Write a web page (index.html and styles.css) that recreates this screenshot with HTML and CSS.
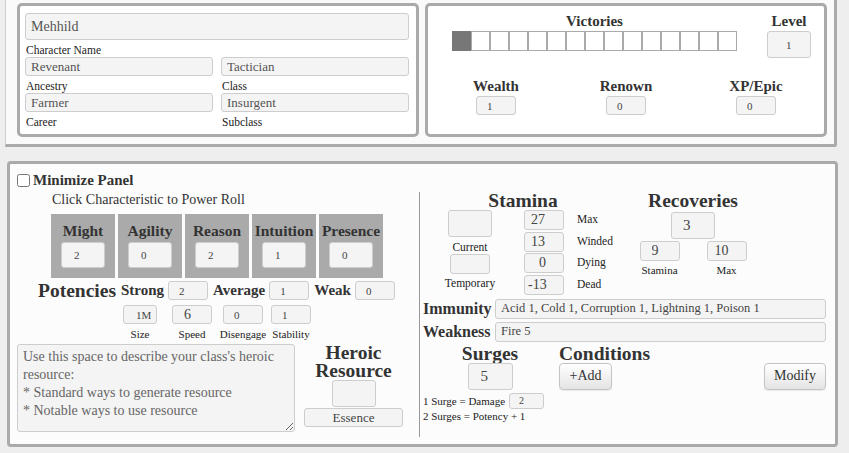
FILE: index.html
```html
<!DOCTYPE html>
<html>
<head>
<meta charset="utf-8">
<link rel="stylesheet" href="styles.css">
</head>
<body>
<div class="top">
  <section class="panel ident">
    <input class="field name" value="Mehhild">
    <div class="lbl">Character Name</div>
    <div class="pair">
      <div><input class="field txt" value="Revenant"><div class="lbl">Ancestry</div></div>
      <div><input class="field txt" value="Tactician"><div class="lbl">Class</div></div>
      <div><input class="field txt" value="Farmer"><div class="lbl">Career</div></div>
      <div><input class="field txt" value="Insurgent"><div class="lbl">Subclass</div></div>
    </div>
  </section>
  <section class="panel prog">
    <div class="prog-row">
      <div class="vic">
        <div class="h3">Victories</div>
        <div class="boxes"><span class="on"></span><span></span><span></span><span></span><span></span><span></span><span></span><span></span><span></span><span></span><span></span><span></span><span></span><span></span><span></span></div>
      </div>
      <div class="lvl">
        <div class="h3">Level</div>
        <input class="field num lvl-in" value="1">
      </div>
    </div>
    <div class="prog-row2">
      <div class="stat"><div class="h3">Wealth</div><input class="field num sm" value="1"></div>
      <div class="stat"><div class="h3">Renown</div><input class="field num sm" value="0"></div>
      <div class="stat"><div class="h3">XP/Epic</div><input class="field num sm" value="0"></div>
    </div>
  </section>
</div>

<main class="main">
  <label class="minimize"><input type="checkbox"><span>Minimize Panel</span></label>
  <div class="cols">
    <div class="left">
      <div class="prompt">Click Characteristic to Power Roll</div>
      <div class="chars">
        <div class="char"><div class="char-name">Might</div><input class="field num char-in" value="2"></div>
        <div class="char"><div class="char-name">Agility</div><input class="field num char-in" value="0"></div>
        <div class="char"><div class="char-name">Reason</div><input class="field num char-in" value="2"></div>
        <div class="char"><div class="char-name">Intuition</div><input class="field num char-in" value="1"></div>
        <div class="char"><div class="char-name">Presence</div><input class="field num char-in" value="0"></div>
      </div>
      <div class="potency">
        <span class="pot-title">Potencies</span>
        <span class="pot-lbl">Strong</span><input class="field num sm" value="2">
        <span class="pot-lbl">Average</span><input class="field num sm" value="1">
        <span class="pot-lbl">Weak</span><input class="field num sm" value="0">
      </div>
      <div class="move">
        <div class="mv"><input class="field num mv-size" value="1M"><div class="mv-lbl">Size</div></div>
        <div class="mv"><input class="field num mv-in big" value="6"><div class="mv-lbl">Speed</div></div>
        <div class="mv"><input class="field num mv-in" value="0"><div class="mv-lbl">Disengage</div></div>
        <div class="mv"><input class="field num mv-in" value="1"><div class="mv-lbl">Stability</div></div>
      </div>
      <div class="res-row">
        <textarea class="field notes">Use this space to describe your class's heroic resource:
* Standard ways to generate resource
* Notable ways to use resource</textarea>
        <div class="heroic">
          <div class="h2">Heroic Resource</div>
          <input class="field hr-in" value="">
          <input class="field essence" value="Essence">
        </div>
      </div>
    </div>
    <div class="right">
      <div class="vitals">
        <div class="stamina">
          <div class="h2">Stamina</div>
          <div class="st-body">
            <div class="st-cur">
              <input class="field cur-in" value="">
              <div class="lbl2 cur-lbl">Current</div>
              <input class="field tmp-in" value="">
              <div class="lbl2 tmp-lbl">Temporary</div>
            </div>
            <div class="st-list">
              <div class="st-row"><input class="field num st-in" value="27"><span class="lbl2">Max</span></div>
              <div class="st-row"><input class="field num st-in" value="13"><span class="lbl2">Winded</span></div>
              <div class="st-row"><input class="field num st-in st-dying" value="0"><span class="lbl2">Dying</span></div>
              <div class="st-row"><input class="field num st-in st-dead" value="-13"><span class="lbl2">Dead</span></div>
            </div>
          </div>
        </div>
        <div class="recov">
          <div class="h2">Recoveries</div>
          <input class="field num rec-in" value="3">
          <div class="rc-row">
            <div class="rc-col"><input class="field num st-in rc-a" value="9"><div class="lbl3">Stamina</div></div>
            <div class="rc-col"><input class="field num st-in rc-b" value="10"><div class="lbl3">Max</div></div>
          </div>
        </div>
      </div>
      <div class="def-row imm">
        <span class="def-lbl">Immunity</span>
        <input class="field def-in" value="Acid 1, Cold 1, Corruption 1, Lightning 1, Poison 1">
      </div>
      <div class="def-row">
        <span class="def-lbl">Weakness</span>
        <input class="field def-in" value="Fire 5">
      </div>
      <div class="lower">
        <div class="surges">
          <div class="h2">Surges</div>
          <input class="field num surge-in" value="5">
          <div class="surge-line"><span>1 Surge = Damage</span><input class="field num surge-dmg" value="2"></div>
          <div class="surge-line2">2 Surges = Potency + 1</div>
        </div>
        <div class="conds">
          <div class="h2 left-h">Conditions</div>
          <div class="cond-btns">
            <button class="btn add">+Add</button>
            <button class="btn modify">Modify</button>
          </div>
        </div>
      </div>
    </div>
  </div>
</main>
</body>
</html>
```

FILE: styles.css
```css
html, body {
  margin: 0;
  padding: 0;
}
body {
  background: #eeeeee;
  font-family: "Liberation Serif", "Times New Roman", serif;
  color: #333;
  width: 849px;
  height: 453px;
  overflow: hidden;
}

/* ---------- generic field ---------- */
.field {
  box-sizing: border-box;
  display: block;
  margin: 0;
  border: 1px solid #cdcdcd;
  border-radius: 3px;
  background: #f4f4f4;
  font-family: "Liberation Serif", "Times New Roman", serif;
  color: #555;
  padding: 0 5px;
  outline: none;
}
.num {
  font-size: 11px;
  padding-left: 10px;
  color: #444;
}

/* ---------- top area ---------- */
.top {
  display: flex;
  gap: 6px;
  box-sizing: border-box;
  margin-left: 5px;
  width: 832px;
  padding: 3px 7px 7px 11px;
  background: #fafafa;
  border-left: 1px solid #cfcfcf;
  border-right: 3px solid #aaa;
  border-bottom: 3px solid #aaa;
  border-bottom-right-radius: 3px;
}
.panel {
  box-sizing: border-box;
  width: 402px;
  height: 134px;
  border: 3px solid #aaa;
  border-radius: 5px;
  background: #fff;
}
.ident {
  padding: 7px 7px 0 5px;
}
.name {
  width: 384px;
  height: 27px;
  font-size: 14px;
}
.lbl {
  font-size: 11.5px;
  line-height: 14px;
  height: 17px;
  padding-top: 3px;
  box-sizing: border-box;
  color: #222;
  padding-left: 1px;
}
.pair {
  display: grid;
  grid-template-columns: 188px 188px;
  column-gap: 8px;
}
.txt {
  width: 188px;
  height: 19px;
  font-size: 13px;
}

.prog {
  padding-top: 7px;
}
.h3 {
  font-weight: bold;
  font-size: 15px;
  line-height: 16px;
  text-align: center;
  color: #333;
}
.prog-row {
  display: flex;
  padding-left: 24px;
  gap: 30px;
}
.vic {
  width: 285px;
}
.boxes {
  display: flex;
  margin-top: 2px;
}
.boxes span {
  box-sizing: border-box;
  width: 19px;
  height: 20px;
  border: 1px solid #aaa;
  background: #fff;
}
.boxes span.on {
  background: #777;
  border-color: #777;
}
.lvl {
  width: 44px;
  display: flex;
  flex-direction: column;
  align-items: center;
}
.lvl-in {
  margin-top: 2px;
  width: 44px;
  height: 27px;
  padding-left: 18px;
}
.prog-row2 {
  display: flex;
  gap: 30px;
  padding-left: 18px;
  margin-top: 20px;
}
.stat {
  width: 100px;
  display: flex;
  flex-direction: column;
  align-items: center;
}
.sm {
  width: 40px;
  height: 19px;
}
.stat .sm {
  margin-top: 2px;
}

/* ---------- main panel ---------- */
.main {
  display: block;
  box-sizing: border-box;
  margin: 14px 0 0 7px;
  width: 831px;
  height: 286px;
  border: 3px solid #aaa;
  border-radius: 4px;
  background: #fcfcfc;
  padding: 10px 0 0 7px;
}
.minimize {
  display: flex;
  align-items: center;
  gap: 3px;
  height: 13px;
  font-weight: bold;
  font-size: 15px;
  color: #333;
}
.minimize input {
  margin: 0;
  width: 13px;
  height: 13px;
}
.cols {
  display: flex;
  margin: 5px 0 0 -7px;
  height: 245px;
}
.left {
  width: 409px;
}
.right {
  flex: 1;
  border-left: 1px solid #999;
  padding: 0 9px 0 3px;
}

.prompt {
  margin-left: 42px;
  font-size: 14px;
  line-height: 16px;
  color: #333;
}
.chars {
  display: flex;
  gap: 3px;
  margin: 6px 0 0 41px;
}
.char {
  width: 64px;
  height: 64px;
  background: #aaa;
  display: flex;
  flex-direction: column;
  align-items: center;
  padding-top: 8px;
  box-sizing: border-box;
}
.char-name {
  font-weight: bold;
  font-size: 15.5px;
  line-height: 18px;
  color: #333;
  white-space: nowrap;
}
.char-in {
  margin-top: 2px;
  width: 44px;
  height: 26px;
  padding-left: 12px;
}
.potency {
  display: flex;
  align-items: center;
  gap: 4px;
  margin: 3px 0 0 28px;
  height: 19px;
}
.pot-title {
  font-weight: bold;
  font-size: 19.5px;
  color: #333;
}
.pot-lbl {
  font-weight: bold;
  font-size: 15px;
  color: #333;
  margin-left: 1px;
}
.move {
  display: grid;
  grid-template-columns: 50px 54px 48px 48px;
  margin: 5px 0 0 105px;
}
.mv {
  display: flex;
  flex-direction: column;
  align-items: center;
}
.mv-size {
  width: 34px;
  height: 19px;
  padding-left: 12px;
}
.mv-in {
  width: 40px;
  height: 19px;
}
.mv-in.big {
  font-size: 14px;
  padding-left: 11px;
}
.mv-lbl {
  font-size: 11px;
  line-height: 14px;
  margin-top: 3px;
  color: #222;
  white-space: nowrap;
}
.res-row {
  display: flex;
  margin-top: 3px;
}
.notes {
  margin-left: 7px;
  width: 278px;
  height: 88px;
  font-size: 14px;
  line-height: 18px;
  padding: 3px 5px;
  color: #666;
  resize: both;
  overflow: hidden;
}
.heroic {
  margin-left: 9px;
  width: 99px;
  display: flex;
  flex-direction: column;
  align-items: center;
}
.h2 {
  font-weight: bold;
  font-size: 19.5px;
  line-height: 18px;
  text-align: center;
  color: #333;
}
.hr-in {
  width: 44px;
  height: 27px;
}
.essence {
  margin-top: 1px;
  width: 99px;
  height: 19px;
  font-size: 13px;
  text-align: center;
  color: #444;
}

/* right column */
.vitals {
  display: flex;
}
.stamina {
  width: 200px;
}
.st-body {
  display: flex;
}
.st-cur {
  width: 94px;
  display: flex;
  flex-direction: column;
  align-items: center;
}
.cur-in {
  width: 44px;
  height: 27px;
}
.tmp-in {
  width: 40px;
  height: 20px;
}
.lbl2 {
  font-size: 11.5px;
  line-height: 14px;
  color: #222;
}
.cur-lbl {
  margin-top: 3px;
}
.tmp-lbl {
  margin-top: 2px;
}
.st-list {
  margin-left: 7px;
  display: flex;
  flex-direction: column;
  gap: 1.5px;
}
.st-row {
  display: flex;
  align-items: center;
  gap: 13px;
}
.st-row .lbl2 {
  margin-top: -2px;
}
.st-in {
  width: 40px;
  height: 20px;
  font-size: 14px;
  padding-left: 6px;
}
.st-dying {
  padding-left: 14px;
}
.st-dead {
  padding-left: 3px;
}
.recov {
  width: 140px;
  display: flex;
  flex-direction: column;
  align-items: center;
}
.rec-in {
  margin-top: 2px;
  width: 44px;
  height: 27px;
  font-size: 15px;
  padding-left: 11px;
}
.rc-row {
  display: flex;
  gap: 7px;
  margin-top: 2px;
}
.rc-col {
  width: 60px;
  display: flex;
  flex-direction: column;
  align-items: center;
}
.rc-a {
  padding-left: 11px;
}
.rc-b {
  padding-left: 7px;
}
.lbl3 {
  font-size: 11px;
  line-height: 14px;
  margin-top: 2px;
  color: #222;
}
.def-row {
  display: flex;
  align-items: center;
  margin-top: 3px;
}
.def-row.imm {
  margin-top: 4px;
}
.def-lbl {
  width: 72px;
  font-weight: bold;
  font-size: 16px;
  color: #333;
}
.def-in {
  flex: 1;
  height: 20px;
  font-size: 12.5px;
  color: #444;
}
.lower {
  display: flex;
  margin-top: 3px;
}
.surges {
  width: 134px;
  display: flex;
  flex-direction: column;
}
.surge-in {
  align-self: center;
  width: 45px;
  height: 27px;
  font-size: 15px;
  padding-left: 12px;
}
.surge-line {
  display: flex;
  align-items: center;
  gap: 4px;
  margin-top: 3px;
  height: 16px;
  font-size: 11px;
  color: #222;
  white-space: nowrap;
}
.surge-dmg {
  width: 35px;
  height: 16px;
  font-size: 10px;
  padding-left: 9px;
}
.surge-line2 {
  font-size: 11px;
  line-height: 14px;
  color: #222;
  white-space: nowrap;
}
.conds {
  flex: 1;
  margin-left: 2px;
  padding-right: 0;
}
.left-h {
  text-align: left;
}
.cond-btns {
  display: flex;
  justify-content: space-between;
}
.btn {
  box-sizing: border-box;
  height: 27px;
  border: 1px solid #c4c4c4;
  border-radius: 4px;
  background: linear-gradient(#ffffff, #e4e4e4);
  box-shadow: 0 1px 1px rgba(0,0,0,0.08);
  font-family: "Liberation Serif", "Times New Roman", serif;
  font-size: 14px;
  color: #333;
  padding: 0;
}
.add {
  width: 53px;
}
.modify {
  width: 62px;
}
```
